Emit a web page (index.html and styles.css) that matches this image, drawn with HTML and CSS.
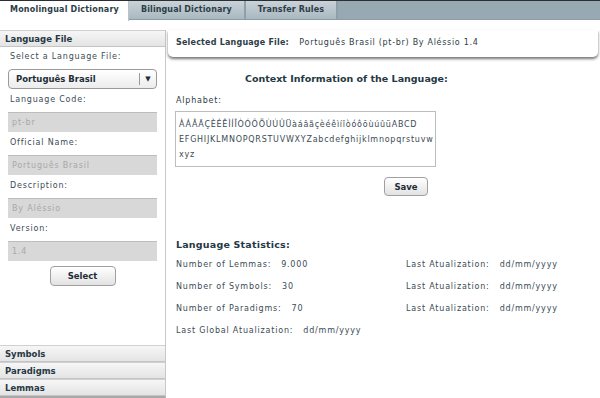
FILE: index.html
```html
<!DOCTYPE html>
<html lang="en">
  <head>
    <meta charset="UTF-8" />
    <title>Monolingual Dictionary</title>
    <link rel="stylesheet" href="styles.css">
  </head>
  <body>
    <nav class="tabs">
      <div class="tab active">Monolingual Dictionary</div>
      <div class="tab">Bilingual Dictionary</div>
      <div class="tab">Transfer Rules</div>
    </nav>

    <div class="page">
      <aside class="sidebar">
        <div class="acc-head">Language File</div>
        <div class="acc-body">
          <label>Select a Language File:</label>
          <div class="dropdown">
            <span>Português Brasil</span>
            <span class="arrow">&#9660;</span>
          </div>
          <label>Language Code:</label>
          <div class="field">pt-br</div>
          <label>Official Name:</label>
          <div class="field">Português Brasil</div>
          <label>Description:</label>
          <div class="field">By Aléssio</div>
          <label>Version:</label>
          <div class="field">1.4</div>
          <div class="center"><button class="btn select-btn">Select</button></div>
        </div>
        <div class="acc-head">Symbols</div>
        <div class="acc-head">Paradigms</div>
        <div class="acc-head">Lemmas</div>
      </aside>

      <main class="content">
        <div class="selected">
          <b>Selected Language File:</b>
          <span>Português Brasil (pt-br) By Aléssio 1.4</span>
        </div>

        <h2>Context Information of the Language:</h2>
        <p class="small">Alphabet:</p>
        <div class="alpha-row">
          <div class="alphabet">ÀÁÂÃÇÈÉÊÌÍÎÒÓÔÕÙÚÛÜàáâãçèéêìíîòóôõùúûüABCD<br>EFGHIJKLMNOPQRSTUVWXYZabcdefghijklmnopqrstuvw<br>xyz</div>
          <button class="btn save-btn">Save</button>
        </div>

        <h3>Language Statistics:</h3>
        <div class="stats">
          <div><span class="key">Number of Lemmas:</span>9.000</div>
          <div><span class="key">Last Atualization:</span>dd/mm/yyyy</div>
          <div><span class="key">Number of Symbols:</span>30</div>
          <div><span class="key">Last Atualization:</span>dd/mm/yyyy</div>
          <div><span class="key">Number of Paradigms:</span>70</div>
          <div><span class="key">Last Atualization:</span>dd/mm/yyyy</div>
          <div><span class="key">Last Global Atualization:</span>dd/mm/yyyy</div>
        </div>
      </main>
    </div>
  </body>
</html>
```

FILE: styles.css
```css
/* General Reset */
* {
  margin: 0;
  padding: 0;
  box-sizing: border-box;
}

body {
  width: 600px;
  height: 398px;
  overflow: hidden;
  background: white;
  color: #2e3d47;
  font-family: "DejaVu Sans", Verdana, sans-serif;
  font-size: 8px;
  letter-spacing: 0.8px;
}

/* Tabs */
.tabs {
  display: flex;
  height: 20px;
  background-color: #97aab4;
  border-top: 1px solid #2a2f33;
  border-bottom: 1px solid #8a9ca6;
}

.tab {
  padding: 0 12px;
  line-height: 18px;
  font-weight: bold;
  font-size: 8px;
  letter-spacing: 0.1px;
  color: #2e3d47;
  background: linear-gradient(#c9d3d8, #a9b8c0);
  border-right: 2px solid #8d9fa9;
}

.tab.active {
  width: 129px;
  padding: 0 0 0 10px;
  background: white;
  border-right: 1px solid #b9c4ca;
  height: 20px;
  letter-spacing: 0.2px;
}

/* Layout */
.page {
  display: flex;
  height: 378px;
}

.sidebar {
  width: 166px;
  margin-top: 10px;
  display: flex;
  flex-direction: column;
  border-right: 1px solid #c8c8c8;
  border-bottom: 2px solid #a9a9a9;
}

.acc-head {
  height: 17px;
  line-height: 16px;
  padding-left: 5px;
  font-weight: bold;
  font-size: 8.5px;
  letter-spacing: 0;
  color: #263844;
  background: linear-gradient(#f6f6f6, #e4e4e4);
  border-top: 1px solid #d0d0d0;
  border-bottom: 1px solid #c4c4c4;
}

.acc-body {
  flex-grow: 1;
  padding: 0 8px;
}

label {
  display: block;
  line-height: 10px;
  margin: 6px 0 7px 2px;
  color: #3b4b55;
}

.acc-body label:first-child {
  margin-top: 5px;
}

.dropdown {
  display: flex;
  justify-content: space-between;
  align-items: center;
  height: 20px;
  margin-bottom: 3px;
  padding-left: 7px;
  border: 1px solid #9a9a9a;
  border-radius: 4px;
  background: linear-gradient(#ffffff, #ececec);
  font-weight: bold;
  font-size: 8.5px;
  letter-spacing: 0;
  color: #1f2d36;
}

.dropdown .arrow {
  width: 17px;
  border-left: 1px solid #9a9a9a;
  text-align: center;
  font-size: 7px;
  line-height: 12px;
}

.field {
  height: 20px;
  line-height: 19px;
  padding-left: 4px;
  background-color: #d8d8d8;
  border-top: 1px solid #bdbdbd;
  color: #a8a8a8;
}

.center {
  text-align: center;
  margin-top: 5px;
}

.btn {
  font-family: "DejaVu Sans", Verdana, sans-serif;
  font-weight: bold;
  font-size: 8.5px;
  color: #1f2d36;
  height: 20px;
  border: 1px solid #a0a0a0;
  border-radius: 4px;
  background: linear-gradient(#ffffff, #e2e2e2);
}

.select-btn {
  width: 66px;
}

/* Right content */
.content {
  flex-grow: 1;
  padding: 10px 2px 0 2px;
}

.selected {
  height: 27px;
  line-height: 26px;
  padding-left: 8px;
  background: white;
  border-radius: 0 0 5px 5px;
  box-shadow: 0 2px 3px rgba(0, 0, 0, 0.55);
}

.selected b {
  margin-right: 7px;
  letter-spacing: 0.2px;
}

.selected span {
  letter-spacing: 0.7px;
}

h2 {
  margin: 16px 0 0 77px;
  font-size: 9.5px;
  letter-spacing: 0;
  color: #263844;
}

.small {
  margin: 12px 0 0 8px;
}

.alpha-row {
  width: 261px;
  margin: 6px 0 0 7px;
}

.alphabet {
  height: 56px;
  padding: 5px 3px;
  border: 1px solid #bdbdbd;
  line-height: 15px;
  font-size: 8px;
  letter-spacing: 0.75px;
  white-space: nowrap;
  overflow: hidden;
  color: #3b4b55;
}

.save-btn {
  display: block;
  width: 44px;
  margin: 10px 8px 0 auto;
  height: 19px;
}

h3 {
  margin: 43px 0 0 8px;
  font-size: 9.5px;
  letter-spacing: 0.2px;
  color: #263844;
}

.stats {
  display: grid;
  grid-template-columns: 230px 1fr;
  row-gap: 12px;
  margin: 10px 0 0 8px;
  line-height: 10px;
  color: #3b4b55;
}

.stats .key {
  margin-right: 10px;
}
```
